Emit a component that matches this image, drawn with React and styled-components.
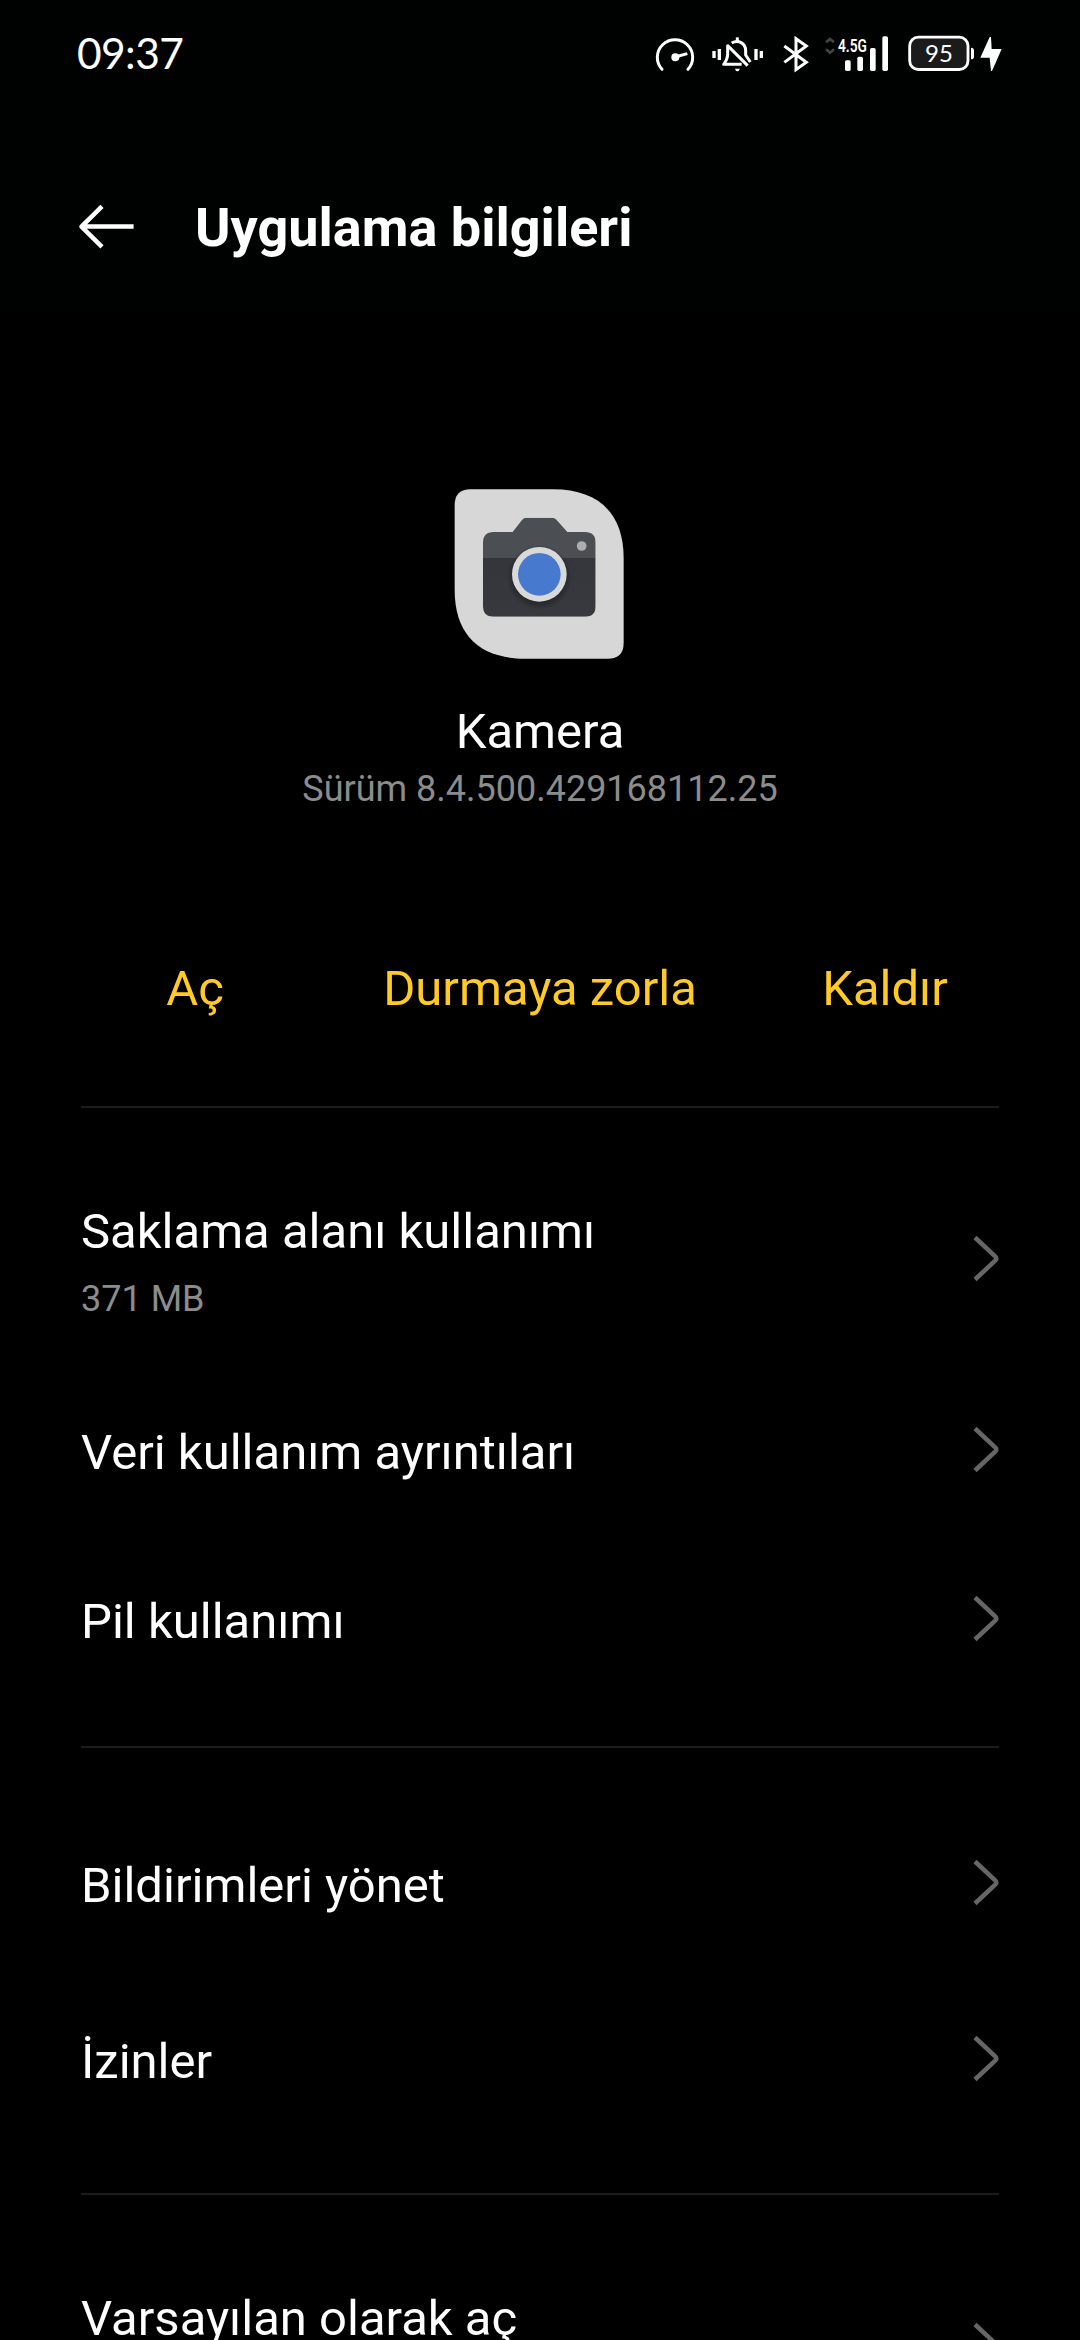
import React from "react";
import styled, { createGlobalStyle } from "styled-components";

const GlobalStyle = createGlobalStyle`
  * { box-sizing: border-box; }
  html, body { margin: 0; padding: 0; background: #000; }
  body { font-family: Roboto, "Noto Sans", sans-serif; color: #fff; overflow: hidden; }
  svg { display: block; flex: none; overflow: visible; }
`;

const Screen = styled.main`
  display: flex;
  flex-direction: column;
  width: 1080px;
  height: 2340px;
  overflow: hidden;
  background: #000;
`;

const Top = styled.div`
  flex: none;
  height: 312px;
  background: #000201;
`;

const StatusBar = styled.div`
  display: flex;
  align-items: center;
  justify-content: space-between;
  height: 108px;
  padding: 0 77px;
`;

const Clock = styled.time`
  margin-bottom: 3px;
  font-family: Lato, sans-serif;
  font-size: 42.5px;
  line-height: 51px;
  letter-spacing: -0.6px;
`;

const StatusIcons = styled.div`
  display: flex;
  align-items: center;
  padding-top: 2px;
`;

const Toolbar = styled.header`
  display: flex;
  align-items: flex-start;
  height: 204px;
  padding: 88px 79px 0 78px;
`;

const BackButton = styled.button`
  display: flex;
  margin: 7px 60px 0 0;
  padding: 0;
  border: 0;
  background: none;
`;

const Title = styled.h1`
  margin: 0;
  font-size: 54px;
  line-height: 63px;
  font-weight: 700;
`;

const AppSummary = styled.section`
  display: flex;
  flex: none;
  flex-direction: column;
  align-items: center;
  height: 616px;
  padding-top: 177px;
`;

const AppName = styled.h2`
  margin: 43px 0 0;
  font-size: 49px;
  line-height: 59px;
  font-weight: 400;
`;

const Version = styled.p`
  margin: 6px 0 0;
  font-size: 36px;
  line-height: 44px;
  color: #8c8c8c;
`;

const Actions = styled.div`
  display: grid;
  flex: none;
  grid-template-columns: repeat(3, 345px);
  justify-content: center;
  align-content: start;
  height: 178px;
  padding-top: 31px;
`;

const Action = styled.button`
  padding: 0;
  border: 0;
  background: none;
  font: 400 49px/59px Roboto, "Noto Sans", sans-serif;
  color: #ffca28;
`;

const Group = styled.section`
  flex: none;
  margin: 0 81px;
  padding: ${(p) => p.$pad};
  border-top: 2px solid #1c1c1c;
`;

const Row = styled.div`
  display: flex;
  align-items: center;
  justify-content: space-between;
  height: ${(p) => p.$height}px;
`;

const RowLabel = styled.div`
  display: flex;
  flex-direction: column;
  gap: 16px;
  min-height: ${(p) => (p.$tall ? 125 : 65)}px;
  padding-top: 6px;
`;

const RowTitle = styled.span`
  font-size: 49px;
  line-height: 59px;
`;

const RowNote = styled.span`
  font-size: 36px;
  line-height: 44px;
  color: #8c8c8c;
`;

function GaugeIcon() {
  return (
    <svg width="56" height="70" viewBox="45 0 168 210" fill="none" stroke="#fff" strokeWidth="9">
      <path d="M66 148 A53 53 0 1 1 144 148" strokeLinecap="round" />
      <path d="M105 111 L142 101" strokeWidth="9" />
      <circle cx="106" cy="112" r="12" fill="#fff" stroke="none" />
    </svg>
  );
}

function MutedBellIcon() {
  return (
    <svg width="71" height="70" viewBox="213 0 213 210" fill="none" stroke="#fff" strokeWidth="9">
      <path d="M222 93 V114 M238 87 V120 M348 87 V120 M364 93 V114" strokeWidth="10" />
      <path d="M292 52 V64" strokeWidth="9" />
      <path d="M275 69 C295 57 317 70 317 92 V105 L331 126" />
      <path d="M305 133 H251 C260 121 263 115 263 102 V77 L323 137" strokeLinejoin="round" />
      <path d="M285 146 H300 Q297 154 292 154 Q287 154 285 146Z" fill="#fff" stroke="none" />
    </svg>
  );
}

function BluetoothIcon() {
  return (
    <svg width="38" height="70" viewBox="426 0 114 210" fill="none" stroke="#fff" strokeWidth="9">
      <path d="M433 78 L499 127 L468 149 V56 L499 78 L433 127" />
    </svg>
  );
}

function SignalIcon() {
  return (
    <svg width="81" height="70" viewBox="0 0 243 210">
      <path d="M18 67 L30 57 L42 67 M18 88 L30 98 L42 88" fill="none" stroke="#444" strokeWidth="8" />
      <text
        x="54"
        y="97"
        textLength="87"
        lengthAdjust="spacingAndGlyphs"
        fill="#fff"
        fontFamily="Roboto, sans-serif"
        fontWeight="600"
        fontSize="57"
      >
        4.5G
      </text>
      <g fill="#fff">
        <rect x="75" y="121" width="17" height="32" rx="5" />
        <rect x="112" y="110" width="17" height="43" rx="5" />
        <rect x="150" y="84" width="17" height="69" rx="5" />
        <rect x="187" y="49" width="17" height="104" rx="5" />
      </g>
    </svg>
  );
}

function BatteryIcon() {
  return (
    <svg width="102" height="70" viewBox="243 0 306 210">
      <rect x="269" y="51.5" width="175" height="97" rx="26" fill="#1b1b1b" stroke="#fff" strokeWidth="8.5" />
      <path d="M453 83 Q462 84 462 91 V110 Q462 117 453 118Z" fill="#fff" />
      <text x="357" y="125" textAnchor="middle" fill="#fff" fontFamily="Lato, sans-serif" fontSize="72">
        95
      </text>
      <path d="M509 51 H513 L515 87 H545 L516 153 H513 L509 113 H481Z" fill="#fff" />
    </svg>
  );
}

function BackIcon() {
  return (
    <svg width="57" height="46" viewBox="0 0 57 46" fill="none" stroke="#fff" strokeWidth="4.5">
      <path d="M24 3.3 L3.5 23.6 L24 43.9 M3.5 23.6 H55.6" strokeLinejoin="round" />
    </svg>
  );
}

function CameraIcon() {
  return (
    <svg width="170" height="170" viewBox="75 57 510 510">
      <defs>
        <linearGradient id="bodyLower" x1="0" y1="0" x2="0.3" y2="1">
          <stop offset="0" stopColor="#33353a" />
          <stop offset="1" stopColor="#37393e" />
        </linearGradient>
        <radialGradient id="lensShadow">
          <stop offset="0.7" stopColor="#1c1d20" stopOpacity="0.8" />
          <stop offset="1" stopColor="#1c1d20" stopOpacity="0" />
        </radialGradient>
        <clipPath id="cameraBody">
          <path d="M191 186 H248 L276 150 Q281 143 290 143 H365 Q374 143 380 150 L412 186 H465 Q497 186 497 218 V408 Q497 440 465 440 H191 Q159 440 159 408 V218 Q159 186 191 186Z" />
        </clipPath>
      </defs>
      <path
        d="M122 58 H370 C500 58 581 125 581 265 V518 Q581 566 533 566 H285 C155 566 74 500 74 360 V106 Q74 58 122 58Z"
        fill="#d7d7d7"
      />
      <g clipPath="url(#cameraBody)">
        <rect x="150" y="140" width="350" height="124" fill="#4b4e53" />
        <rect x="150" y="264" width="350" height="180" fill="url(#bodyLower)" />
        <circle cx="328" cy="322" r="98" fill="url(#lensShadow)" />
      </g>
      <circle cx="328" cy="313" r="82" fill="#d9d9d9" />
      <circle cx="328" cy="313" r="64" fill="#4779cf" />
      <circle cx="455" cy="228" r="14.5" fill="#acaeb0" />
    </svg>
  );
}

function Chevron() {
  return (
    <svg width="26" height="47" viewBox="0 0 26 47" fill="none" stroke="#666" strokeWidth="4.5">
      <path d="M2 2.5 L22.2 21.3 Q24.5 23.5 22.2 25.7 L2 44.5" />
    </svg>
  );
}

const groups = [
  {
    pad: "44px 0 43px",
    rows: [
      { title: "Saklama alanı kullanımı", note: "371 MB", tall: true, height: 213 },
      { title: "Veri kullanım ayrıntıları", height: 169 },
      { title: "Pil kullanımı", height: 169 },
    ],
  },
  {
    pad: "46px 0 47px",
    rows: [
      { title: "Bildirimleri yönet", height: 177 },
      { title: "İzinler", height: 175 },
    ],
  },
  {
    pad: "44px 0 0",
    rows: [{ title: "Varsayılan olarak aç", tall: true, height: 213 }],
  },
];

export default function App() {
  return (
    <Screen>
      <GlobalStyle />
      <Top>
        <StatusBar>
          <Clock>09:37</Clock>
          <StatusIcons>
            <GaugeIcon />
            <MutedBellIcon />
            <BluetoothIcon />
            <SignalIcon />
            <BatteryIcon />
          </StatusIcons>
        </StatusBar>
        <Toolbar>
          <BackButton aria-label="Geri">
            <BackIcon />
          </BackButton>
          <Title>Uygulama bilgileri</Title>
        </Toolbar>
      </Top>
      <AppSummary>
        <CameraIcon />
        <AppName>Kamera</AppName>
        <Version>Sürüm 8.4.500.429168112.25</Version>
      </AppSummary>
      <Actions>
        <Action>Aç</Action>
        <Action>Durmaya zorla</Action>
        <Action>Kaldır</Action>
      </Actions>
      {groups.map((group) => (
        <Group key={group.rows[0].title} $pad={group.pad}>
          {group.rows.map((row) => (
            <Row key={row.title} $height={row.height}>
              <RowLabel $tall={row.tall}>
                <RowTitle>{row.title}</RowTitle>
                {row.note && <RowNote>{row.note}</RowNote>}
              </RowLabel>
              <Chevron />
            </Row>
          ))}
        </Group>
      ))}
    </Screen>
  );
}
